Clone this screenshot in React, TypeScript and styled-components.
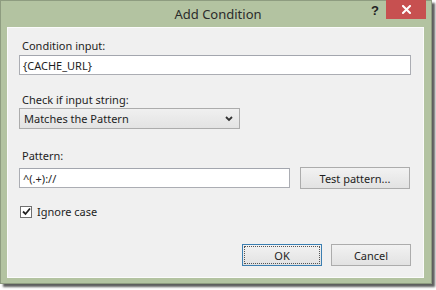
import React from "react";
import styled, { createGlobalStyle } from "styled-components";

const Global = createGlobalStyle`
  html, body { margin: 0; padding: 0; background: #ffffff; }
  body { font-family: "Noto Sans", "Open Sans", "DejaVu Sans", sans-serif; }
`;

const Page = styled.div`
  width: 436px;
  height: 290px;
  background: #ffffff;
  overflow: hidden;
`;

const Window = styled.div`
  box-sizing: border-box;
  width: 432px;
  height: 284px;
  background: #b3c3a1;
  border: 1px solid #8e9c80;
  box-shadow: 3px 3px 2px rgba(40, 40, 40, 0.75);
  display: flex;
  flex-direction: column;
`;

const TitleBar = styled.div`
  position: relative;
  height: 26px;
  display: flex;
  align-items: center;
  justify-content: center;
  flex-shrink: 0;
`;

const Title = styled.div`
  font-family: "Noto Sans", "Open Sans", sans-serif;
  font-size: 13px;
  color: #2b2b2b;
  margin-top: -1px;
  margin-left: 4px;
`;

const HelpButton = styled.div`
  position: absolute;
  top: 2px;
  right: 52px;
  font-family: "Liberation Sans", sans-serif;
  font-weight: bold;
  font-size: 13px;
  color: #222;
`;

const CloseButton = styled.div`
  position: absolute;
  top: -1px;
  right: 5px;
  width: 40px;
  height: 19px;
  background: #c75050;
  display: flex;
  align-items: center;
  justify-content: center;
`;

const Client = styled.div`
  flex: 1;
  margin: 0 7px 5px 6px;
  background: #f0f0f0;
  border: 1px solid #fbfbfb;
  padding: 11px 12px 0 11px;
  display: flex;
  flex-direction: column;
  font-size: 11px;
  color: #1e1e1e;
`;

const Label = styled.div<{ $mt: number }>`
  line-height: 14px;
  height: 14px;
  margin-top: ${(p) => p.$mt}px;
  padding-left: 3px;
`;

const TextInput = styled.div<{ $w?: number; $mt?: number }>`
  box-sizing: border-box;
  height: 20px;
  margin-top: ${(p) => p.$mt ?? 0}px;
  ${(p) => (p.$w ? `width: ${p.$w}px;` : "")}
  background: #ffffff;
  border: 1px solid #abadb3;
  border-top-color: #a3a6ae;
  display: flex;
  align-items: center;
  padding-left: 3px;
  font-size: 11px;
`;

const Select = styled.div`
  box-sizing: border-box;
  margin-top: 1px;
  width: 221px;
  height: 21px;
  background: linear-gradient(#f0f0f0, #e3e3e3);
  border: 1px solid #acacac;
  display: flex;
  align-items: center;
  justify-content: space-between;
  padding: 0 6px 0 4px;
`;

const Row = styled.div<{ $mt: number }>`
  display: flex;
  align-items: center;
  margin-top: ${(p) => p.$mt}px;
`;

const Button = styled.div<{ $w: number; $focus?: boolean; $ml?: number }>`
  position: relative;
  box-sizing: border-box;
  width: ${(p) => p.$w}px;
  height: 22px;
  margin-left: ${(p) => p.$ml ?? 0}px;
  background: linear-gradient(#f2f2f2, #e2e2e2);
  border: 1px solid ${(p) => (p.$focus ? "#3c7fb1" : "#acacac")};
  display: flex;
  align-items: center;
  justify-content: center;
  font-size: 11px;
  color: #1e1e1e;
  ${(p) =>
    p.$focus
      ? `&::after { content: ""; position: absolute; inset: 1px; border: 1px dotted #555; }`
      : ""}
`;

const CheckBox = styled.div`
  box-sizing: border-box;
  width: 12px;
  height: 12px;
  background: #ffffff;
  border: 1px solid #707070;
  display: flex;
  align-items: center;
  justify-content: center;
  margin-left: 1px;
`;

const CheckLabel = styled.span`
  margin-left: 5px;
`;

const Footer = styled.div`
  display: flex;
  justify-content: flex-end;
  gap: 9px;
  margin-top: 25px;
`;

export default function App() {
  return (
    <Page>
      <Global />
      <Window>
        <TitleBar>
          <Title>Add Condition</Title>
          <HelpButton>?</HelpButton>
          <CloseButton>
            <svg width="9" height="9" viewBox="0 0 9 9">
              <path d="M1 1 L8 8 M8 1 L1 8" stroke="#fff" strokeWidth="2" strokeLinecap="square" />
            </svg>
          </CloseButton>
        </TitleBar>
        <Client>
          <Label $mt={0}>Condition input:</Label>
          <TextInput $mt={2}>{"{CACHE_URL}"}</TextInput>
          <Label $mt={18}>Check if input string:</Label>
          <Select>
            <span>Matches the Pattern</span>
            <svg width="8" height="6" viewBox="0 0 8 6">
              <path d="M1 1 L4 4 L7 1" stroke="#333" strokeWidth="1.8" fill="none" />
            </svg>
          </Select>
          <Label $mt={20}>Pattern:</Label>
          <Row $mt={4}>
            <TextInput $w={271}>^(.+)://</TextInput>
            <Button $w={110} $ml={10}>Test pattern...</Button>
          </Row>
          <Row $mt={15}>
            <CheckBox>
              <svg width="9" height="9" viewBox="0 0 9 9">
                <path d="M1 4.5 L3.5 7 L8 1.5" stroke="#222" strokeWidth="1.8" fill="none" />
              </svg>
            </CheckBox>
            <CheckLabel>Ignore case</CheckLabel>
          </Row>
          <Footer>
            <Button $w={80} $focus>OK</Button>
            <Button $w={80}>Cancel</Button>
          </Footer>
        </Client>
      </Window>
    </Page>
  );
}
